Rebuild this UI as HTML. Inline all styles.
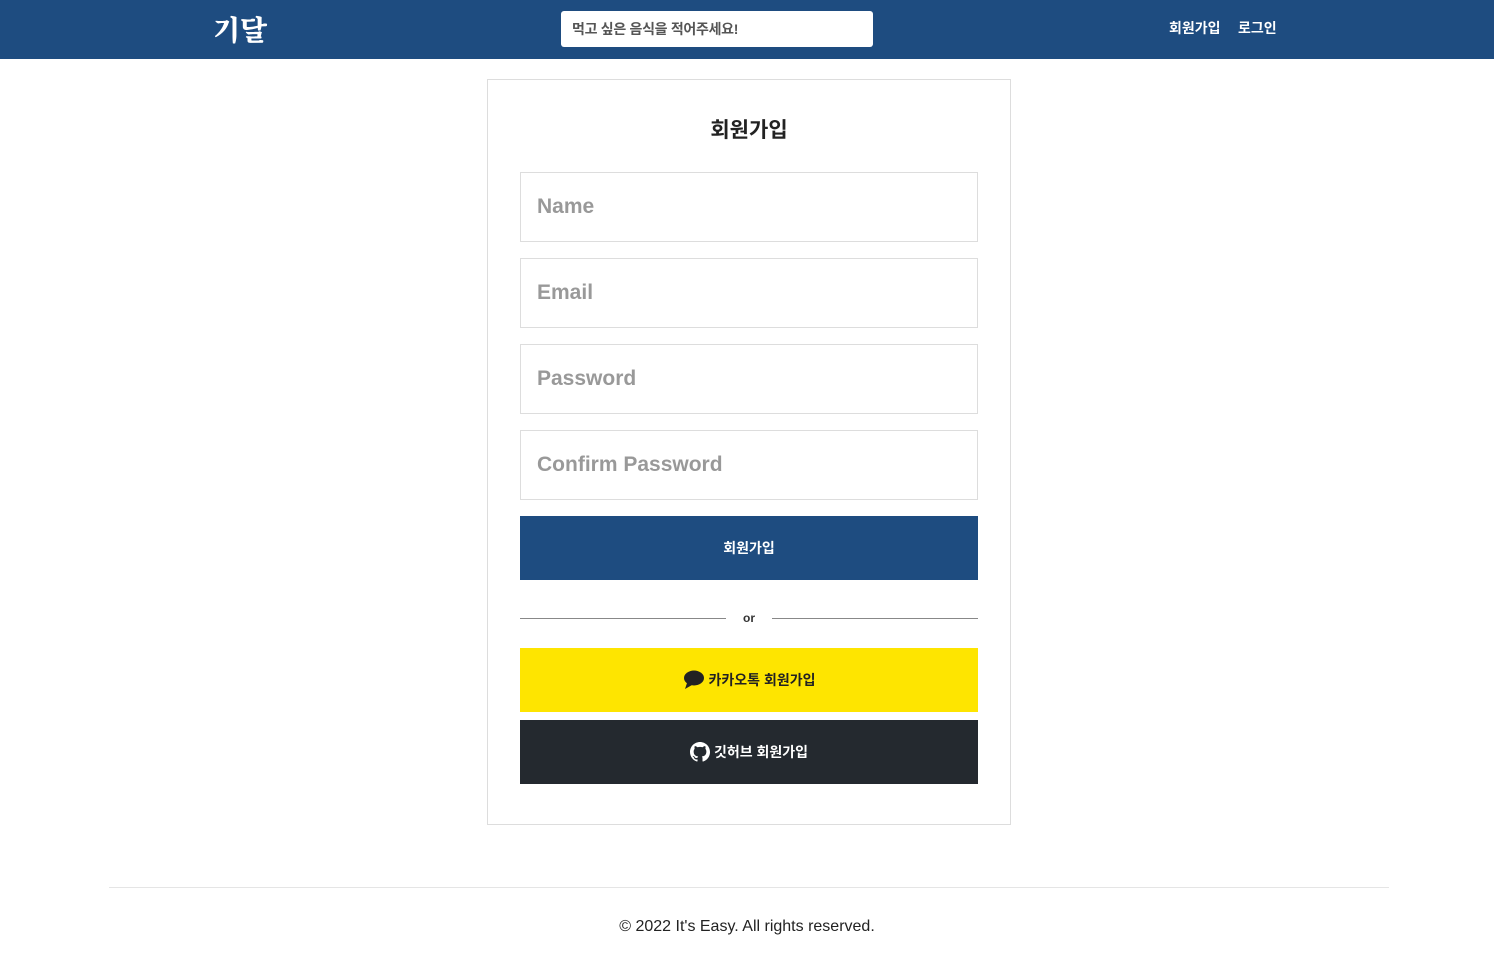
<!DOCTYPE html>
<html><head><meta charset="utf-8"><style>
*{box-sizing:border-box;margin:0;padding:0}
body{width:1494px;height:967px;background:#fff;font-family:"Liberation Sans","Noto Sans CJK KR",sans-serif;position:relative;overflow:hidden}
.hdr{position:absolute;left:0;top:0;width:1494px;height:59px;background:#1e4c80}
.logo{position:absolute;left:213px;top:9px;color:#fff;font-size:28px;font-weight:900;font-family:"Noto Serif CJK SC","Noto Sans CJK KR",serif}
.search{position:absolute;left:561px;top:11px;width:312px;height:36px;background:#fff;border-radius:3px;font-size:14px;color:#555;padding:8px 11px;font-weight:bold;letter-spacing:-0.3px}
.nav{position:absolute;top:18px;color:#fff;font-size:14px;font-weight:bold}
.card{position:absolute;left:487px;top:79px;width:524px;height:746px;border:1px solid #ddd}
h1{position:absolute;left:0;width:100%;top:34px;text-align:center;font-size:21px;color:#222}
.in{position:absolute;left:32px;width:458px;height:70px;border:1px solid #ddd;font-size:21px;color:#999;font-weight:bold;padding:22px 16px}
.btn{position:absolute;left:32px;width:458px;height:64px;font-size:14px;font-weight:bold;display:flex;align-items:center;justify-content:center;gap:4px}
.line{position:absolute;top:538px;height:1px;background:#888;width:206px}
.foot{position:absolute;left:109px;top:887px;width:1280px;border-top:1px solid #e5e5e5}
.copy{position:absolute;left:0;width:1494px;top:918px;text-align:center;font-size:16px;color:#222}
</style></head><body>
<div class="hdr">
<div class="logo">기달</div>
<div class="search">먹고 싶은 음식을 적어주세요!</div>
<div class="nav" style="left:1169px">회원가입</div>
<div class="nav" style="left:1238px">로그인</div>
</div>
<div class="card">
<h1>회원가입</h1>
<div class="in" style="top:92px">Name</div>
<div class="in" style="top:178px">Email</div>
<div class="in" style="top:264px">Password</div>
<div class="in" style="top:350px">Confirm Password</div>
<div class="btn" style="top:436px;background:#1e4c80;color:#fff">회원가입</div>
<div class="line" style="left:32px"></div>
<div style="position:absolute;top:531px;left:0;width:100%;text-align:center;font-size:12px;color:#333;font-weight:bold">or</div>
<div class="line" style="left:284px"></div>
<div class="btn" style="top:568px;background:#fee500;color:#222"><svg width="22" height="20" viewBox="0 0 22 20"><ellipse cx="11" cy="8" rx="10" ry="7.5" fill="#222"/><path d="M4 13 L2 19 L9 15Z" fill="#222"/></svg>카카오톡 회원가입</div>
<div class="btn" style="top:640px;background:#24292f;color:#fff"><svg width="20" height="20" viewBox="0 0 16 16"><path fill="#fff" d="M8 0C3.58 0 0 3.580 0 8c0 3.54 2.29 6.53 5.47 7.59.4.07.55-.17.55-.38v-1.34c-2.230.48-2.7-1.070-2.7-1.070-.36-.92-.89-1.170-.89-1.170-.73-.5.05-.49.05-.49.8.06 1.23.83 1.23.83.71 1.220 1.870.87 2.330.66.07-.52.28-.87.51-1.07-1.78-.2-3.64-.89-3.64-3.95 0-.87.31-1.59.82-2.15-.08-.2-.36-1.02.08-2.12 0 0 .67-.21 2.2.82a7.6 7.6 0 014 0c1.53-1.04 2.2-.82 2.2-.82.44 1.1.16 1.92.08 2.12.51.56.82 1.27.82 2.15 0 3.07-1.87 3.75-3.65 3.95.29.25.54.73.54 1.48v2.2c0 .21.15.46.55.38A8 8 0 0016 8c0-4.42-3.58-8-8-8z"/></svg>깃허브 회원가입</div>
</div>
<div class="foot"></div>
<div class="copy">© 2022 It's Easy. All rights reserved.</div>
</body></html>
